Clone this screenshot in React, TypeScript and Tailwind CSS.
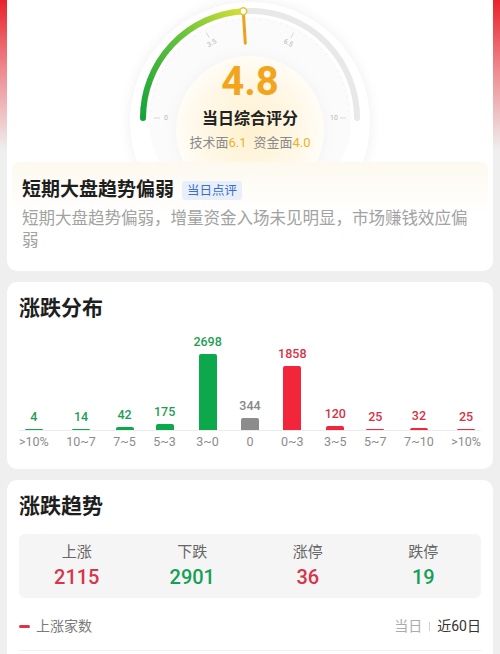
import React from 'react';

type Bar = { value: string; label: string; h: number; text: string; bar: string };

const green = { text: 'text-[#1f9d55]', bar: 'bg-[#0ca84b]' };
const red = { text: 'text-[#d83246]', bar: 'bg-[#f2253b]' };
const gray = { text: 'text-[#888888]', bar: 'bg-[#8c8c8c]' };

const bars: Bar[] = [
  { value: '4', label: '>10%', h: 1, ...green },
  { value: '14', label: '10~7', h: 1, ...green },
  { value: '42', label: '7~5', h: 3, ...green },
  { value: '175', label: '5~3', h: 6, ...green },
  { value: '2698', label: '3~0', h: 76, ...green },
  { value: '344', label: '0', h: 12, ...gray },
  { value: '1858', label: '0~3', h: 64, ...red },
  { value: '120', label: '3~5', h: 4, ...red },
  { value: '25', label: '5~7', h: 1, ...red },
  { value: '32', label: '7~10', h: 2, ...red },
  { value: '25', label: '>10%', h: 1, ...red },
];

const stats = [
  { label: '上涨', value: '2115', cls: 'text-[#d8344a]' },
  { label: '下跌', value: '2901', cls: 'text-[#169f57]' },
  { label: '涨停', value: '36', cls: 'text-[#d8344a]' },
  { label: '跌停', value: '19', cls: 'text-[#169f57]' },
];

// gauge geometry (card coordinates)
const CX = 243;
const CY = 118;
const R = 107;
const pt = (deg: number, r: number) => {
  const a = (deg * Math.PI) / 180;
  return { x: CX + r * Math.cos(a), y: CY - r * Math.sin(a) };
};

const Gauge: React.FC = () => {
  const score = 4.8;
  const end = pt(180 - 180 * (score / 10), R);
  const nd = pt(180 - 180 * (score / 10), R - 32);
  const ticks = [
    { deg: 180, t: '0' },
    { deg: 180 - 63, t: '3.5' },
    { deg: 63, t: '6.5' },
    { deg: 0, t: '10' },
  ];
  const dots = [];
  for (let d = 4; d < 180; d += 4) dots.push(pt(d, 99));
  return (
    <svg className="absolute inset-0 h-full w-full" viewBox="0 0 486 162">
      <defs>
        <linearGradient id="arcg" x1="136" y1="118" x2="240" y2="10" gradientUnits="userSpaceOnUse">
          <stop offset="0" stopColor="#14a33b" />
          <stop offset="0.6" stopColor="#6cc43a" />
          <stop offset="1" stopColor="#dde233" />
        </linearGradient>
        <radialGradient id="core" cx="243" cy="128" r="74" gradientUnits="userSpaceOnUse">
          <stop offset="0" stopColor="#fff1cf" />
          <stop offset="0.7" stopColor="#fff8e8" />
          <stop offset="1" stopColor="#fffdf8" />
        </radialGradient>
        <filter id="soft" x="-30%" y="-30%" width="160%" height="160%">
          <feGaussianBlur stdDeviation="6" />
        </filter>
      </defs>
      <circle cx={CX} cy={CY + 4} r={121} fill="#e4e4e4" opacity="0.55" filter="url(#soft)" />
      <circle cx={CX} cy={CY + 4} r={120} fill="#ffffff" />
      <circle cx={CX} cy={CY} r={101} fill="#fbfbfb" />
      {dots.map((p, i) => (
        <circle key={i} cx={p.x} cy={p.y} r={0.6} fill="#ebebeb" />
      ))}
      <circle cx={CX} cy={130} r={76} fill="#eeeeee" opacity="0.5" filter="url(#soft)" />
      <circle cx={CX} cy={130} r={74} fill="url(#core)" />
      <path d={`M${CX - R} ${CY} A${R} ${R} 0 0 1 ${CX + R} ${CY}`} fill="none" stroke="#e8e8e8" strokeWidth="6" strokeLinecap="round" />
      <path d={`M${CX - R} ${CY} A${R} ${R} 0 0 1 ${end.x} ${end.y}`} fill="none" stroke="url(#arcg)" strokeWidth="6" strokeLinecap="round" />
      {ticks.map((k) => {
        const a = pt(k.deg, 96);
        const b = pt(k.deg, 90);
        const l = pt(k.deg, 84);
        const rot = k.deg === 180 || k.deg === 0 ? 0 : 90 - k.deg;
        return (
          <g key={k.t}>
            <line x1={a.x} y1={a.y} x2={b.x} y2={b.y} stroke="#cfcfcf" strokeWidth="0.8" />
            <text
              x={l.x}
              y={l.y}
              fontSize="7"
              fill="#b8b8b8"
              textAnchor="middle"
              dominantBaseline="central"
              transform={`rotate(${rot} ${l.x} ${l.y})`}
              fontFamily="Roboto, sans-serif"
            >
              {k.t}
            </text>
          </g>
        );
      })}
      <line x1={end.x} y1={end.y} x2={nd.x} y2={nd.y} stroke="#eba21e" strokeWidth="3" strokeLinecap="round" />
      <circle cx={end.x} cy={end.y} r={3.4} fill="#ffffff" stroke="#dccb3a" strokeWidth="1.6" />
    </svg>
  );
};

const App: React.FC = () => {
  return (
    <div className="min-h-[654px] bg-[#efefef] bg-[linear-gradient(to_bottom,#e8222b_0px,#ee8a8f_70px,#efefef_150px)] bg-no-repeat pb-6 font-[Roboto,'Noto_Sans_CJK_SC',sans-serif]">
      {/* score card */}
      <div className="mx-[7px] overflow-hidden rounded-b-[10px] bg-white pb-[19px]">
        <div className="relative h-[162px]">
          <Gauge />
          <div className="relative flex flex-col items-center pt-[62px]">
            <div className="text-[40px] font-bold leading-[40px] text-[#f2a51c]">4.8</div>
            <div className="mt-[6px] text-[16px] font-bold leading-[22px] text-[#222222]">当日综合评分</div>
            <div className="mt-[4px] text-[13px] leading-[18px] text-[#8a8a8a]">
              技术面<span className="text-[#ebb21e]">6.1</span>
              <span className="ml-[7px]">资金面</span>
              <span className="text-[#ebb21e]">4.0</span>
            </div>
          </div>
        </div>
        <div className="mx-[5px] rounded-t-[8px] bg-[linear-gradient(to_bottom,#fdf9ef,#ffffff_60%)] pl-[10px] pr-[10px] pt-[15px]">
          <div className="flex items-center">
            <span className="text-[19px] font-bold leading-[26px] text-[#1e1e1e]">短期大盘趋势偏弱</span>
            <span className="ml-[8px] rounded-[3px] bg-[#e8effb] px-[5px] py-[2px] text-[12.5px] leading-[15px] text-[#3c6fc9]">当日点评</span>
          </div>
          <p className="mt-[5px] text-[16.5px] leading-[22px] text-[#a2a2a2]">
            短期大盘趋势偏弱，增量资金入场未见明显，市场赚钱效应偏弱
          </p>
        </div>
      </div>

      {/* distribution card */}
      <div className="mx-[7px] mt-[11px] rounded-[10px] bg-white px-[12px] pb-[19px] pt-[12px]">
        <div className="text-[21px] font-bold leading-[28px] text-[#1e1e1e]">涨跌分布</div>
        <div className="mt-[13px] grid grid-cols-[repeat(11,auto)] justify-between">
          {bars.map((b, i) => (
            <div key={i} className="flex flex-col items-center justify-end">
              <span className={`text-[12.5px] font-medium leading-[14px] ${b.text}`}>{b.value}</span>
              <div className={`mt-[5px] w-[18px] rounded-t-[2px] ${b.bar}`} style={{ height: b.h }} />
            </div>
          ))}
          <div className="col-span-11 h-px bg-[#ececec]" />
          {bars.map((b, i) => (
            <div key={i} className="mt-[3px] text-center text-[12.5px] leading-[16px] text-[#8c8c8c]">
              {b.label}
            </div>
          ))}
        </div>
      </div>

      {/* trend card */}
      <div className="mx-[7px] mt-[11px] rounded-[10px] bg-white px-[12px] pt-[12px]">
        <div className="text-[21px] font-bold leading-[28px] text-[#1e1e1e]">涨跌趋势</div>
        <div className="mt-[14px] grid grid-cols-4 rounded-[6px] bg-[#f5f5f5] pb-[9px] pt-[8px]">
          {stats.map((s) => (
            <div key={s.label} className="flex flex-col items-center">
              <span className="text-[15px] leading-[20px] text-[#666666]">{s.label}</span>
              <span className={`mt-[3px] text-[20px] font-medium leading-[24px] ${s.cls}`}>{s.value}</span>
            </div>
          ))}
        </div>
        <div className="mt-[18px] flex items-center justify-between">
          <div className="flex items-center">
            <span className="h-[3px] w-[11px] rounded-full bg-[#e03344]" />
            <span className="ml-[6px] text-[14px] leading-[20px] text-[#7a7a7a]">上涨家数</span>
          </div>
          <div className="flex items-center text-[14px] leading-[20px]">
            <span className="text-[#ababab]">当日</span>
            <span className="mx-[7px] h-[9px] w-px bg-[#cfcfcf]" />
            <span className="text-[#333333]">近60日</span>
          </div>
        </div>
        <div className="mt-[14px] h-px bg-[#f0f0f0]" />
        <div className="mt-[2px] text-[11px] leading-[14px] text-[#333333]">5400</div>
        <div className="h-[60px]" />
      </div>
    </div>
  );
};

export default App;
